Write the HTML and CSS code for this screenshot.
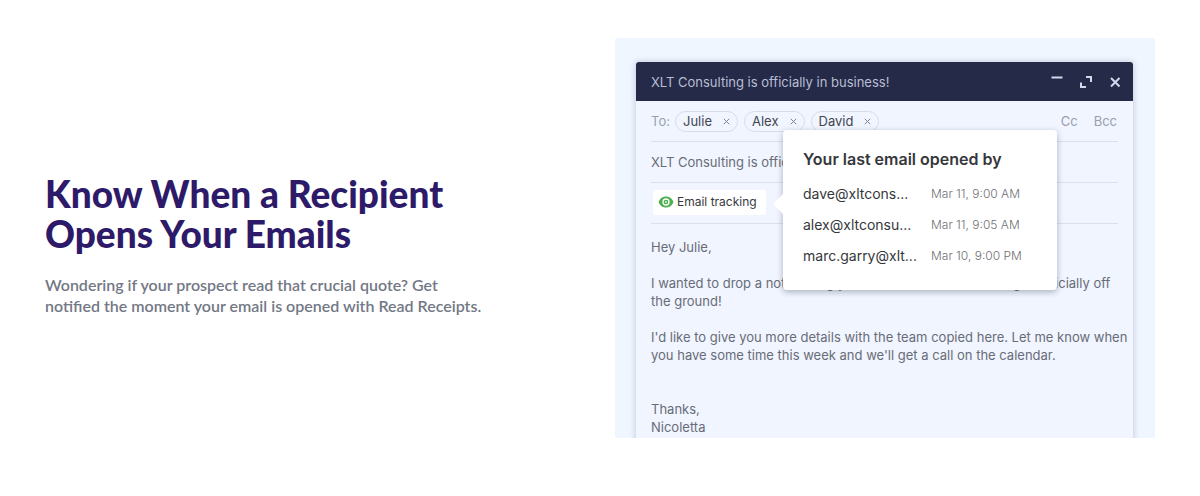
FILE: index.html
```html
<!DOCTYPE html>
<html lang="en">
<head>
<meta charset="utf-8">
<meta name="viewport" content="width=device-width, initial-scale=1">
<title>Read Receipts</title>
<link rel="stylesheet" href="styles.css">
</head>
<body>
<main class="feature">
  <section class="intro">
    <h1 class="intro-title">Know When a Recipient<br>Opens Your Emails</h1>
    <p class="intro-text">Wondering if your prospect read that crucial quote? Get<br>notified the moment your email is opened with Read Receipts.</p>
  </section>

  <section class="stage" aria-label="Email tracking example">
    <article class="window">
      <header class="titlebar">
        <h2 class="titlebar-text">XLT Consulting is officially in business!</h2>
        <div class="titlebar-actions">
          <button class="icon-button" type="button" aria-label="Minimize">
            <svg width="14" height="14" viewBox="0 0 14 14" fill="none" stroke="currentColor" stroke-width="2"><path d="M1.5 2.5h11"/></svg>
          </button>
          <button class="icon-button" type="button" aria-label="Expand">
            <svg width="14" height="14" viewBox="0 0 14 14" fill="none" stroke="currentColor" stroke-width="2"><path d="M7 2h5v5M2 7.5V12h5"/></svg>
          </button>
          <button class="icon-button" type="button" aria-label="Close">
            <svg width="14" height="14" viewBox="0 0 14 14" fill="none" stroke="currentColor" stroke-width="2"><path d="M3 3l8.500 8.500M11.500 3L3 11.500"/></svg>
          </button>
        </div>
      </header>

      <div class="fields">
        <div class="field recipients">
          <span class="to-label">To:</span>
          <ul class="chips">
            <li class="chip">Julie <button class="chip-remove" type="button" aria-label="Remove Julie"><svg width="7" height="7" viewBox="0 0 7 7" fill="none" stroke="currentColor"><path d="M.8.8l5.400 5.400M6.200.8L.8 6.200"/></svg></button></li>
            <li class="chip">Alex <button class="chip-remove" type="button" aria-label="Remove Alex"><svg width="7" height="7" viewBox="0 0 7 7" fill="none" stroke="currentColor"><path d="M.8.8l5.400 5.400M6.200.8L.8 6.200"/></svg></button></li>
            <li class="chip">David <button class="chip-remove" type="button" aria-label="Remove David"><svg width="7" height="7" viewBox="0 0 7 7" fill="none" stroke="currentColor"><path d="M.8.8l5.400 5.400M6.200.8L.8 6.200"/></svg></button></li>
          </ul>
          <div class="copies">
            <button class="copy-button" type="button">Cc</button>
            <button class="copy-button" type="button">Bcc</button>
          </div>
        </div>

        <div class="field">
          <input class="subject" type="text" aria-label="Subject" value="XLT Consulting is officially in business!">
        </div>

        <div class="field field-tools">
          <div class="tracking">
            <button class="tracking-button" type="button">
              <svg width="16" height="12" viewBox="0 0 16 12"><path d="M8 .5C4.500.5 1.700 2.700.6 6c1.100 3.300 3.900 5.500 7.400 5.500s6.300-2.200 7.400-5.500C14.300 2.700 11.500.5 8 .5z" fill="#4caf50"/><circle cx="8" cy="6" r="3" fill="none" stroke="#fff" stroke-width="1.300"/><circle cx="8" cy="6" r="1" fill="#d9f0da"/></svg>
              Email tracking
            </button>
            <aside class="popover">
              <h3 class="popover-title">Your last email opened by</h3>
              <ul class="opens">
                <li class="open"><span class="open-email">dave@xltcons...</span><time class="open-time">Mar 11, 9:00 AM</time></li>
                <li class="open"><span class="open-email">alex@xltconsu...</span><time class="open-time">Mar 11, 9:05 AM</time></li>
                <li class="open"><span class="open-email">marc.garry@xlt...</span><time class="open-time">Mar 10, 9:00 PM</time></li>
              </ul>
            </aside>
          </div>
        </div>

        <div class="message">
          <p>Hey Julie,</p>
          <p>I wanted to drop a note letting you know that XLT Consulting is officially off<br>the ground!</p>
          <p>I'd like to give you more details with the team copied here. Let me know when<br>you have some time this week and we'll get a call on the calendar.</p>
          <p class="signature">Thanks,<br>Nicoletta</p>
        </div>
      </div>
    </article>
  </section>
</main>
</body>
</html>
```

FILE: styles.css
```css
* {
  box-sizing: border-box;
}

body {
  margin: 0;
  background: #fff;
  font-family: Inter, "Liberation Sans", sans-serif;
  font-size: 13px;
  line-height: 18px;
}

h1, h2, h3, p, ul {
  margin: 0;
  padding: 0;
}

ul {
  list-style: none;
}

button, input {
  padding: 0;
  border: 0;
  background: none;
  color: inherit;
  font: inherit;
}

button {
  cursor: pointer;
}

svg {
  display: block;
}

.feature {
  display: grid;
  grid-template-columns: 1fr 1fr;
  gap: 30px;
  align-items: center;
  padding: 38px 45px 58px;
}

.intro {
  padding-top: 13px;
  font-family: Lato, "Open Sans", sans-serif;
}

.intro-title {
  color: #2d1a69;
  font-size: 37px;
  font-weight: 900;
  line-height: 40px;
}

.intro-text {
  margin-top: 20px;
  color: #737885;
  font-size: 16px;
  font-weight: 600;
  line-height: 21px;
}

.stage {
  height: 400px;
  overflow: hidden;
  padding: 24px 22px 0 21px;
  border-radius: 2px;
  background: #f0f6ff;
}

.window {
  height: 400px;
  border-radius: 3px;
  background: #f0f5ff;
  box-shadow: 0 0 6px rgba(40, 45, 85, 0.25);
}

.titlebar {
  display: flex;
  align-items: center;
  justify-content: space-between;
  height: 39px;
  padding: 0 11px 0 15px;
  border-radius: 3px 3px 0 0;
  background: #252a49;
  color: #b9bed2;
}

.titlebar-text {
  font-size: 13px;
  font-weight: 400;
}

.titlebar-actions {
  display: flex;
  gap: 15px;
  color: #d3d8ea;
}

.fields {
  padding: 0 15px;
}

.field {
  display: flex;
  align-items: center;
  height: 41px;
  border-bottom: 1px solid #dce0eb;
}

.field-tools {
  padding-bottom: 2px;
}

.to-label {
  width: 24px;
  color: #9a9fad;
}

.chips {
  display: flex;
  flex: 1;
  gap: 6px;
}

.chip {
  display: flex;
  gap: 11px;
  align-items: center;
  height: 21px;
  padding: 0 7px;
  border: 1px solid #d7dce8;
  border-radius: 11px;
  color: #43464f;
}

.chip-remove {
  color: #7e828e;
}

.copies {
  display: flex;
  gap: 16px;
  padding-right: 1px;
  color: #9a9fad;
}

.subject {
  width: 100%;
  color: #686c78;
}

.tracking {
  position: relative;
  padding-left: 2px;
}

.tracking-button {
  display: flex;
  gap: 3px;
  align-items: center;
  height: 25px;
  padding: 0 9px 0 5px;
  border-radius: 3px;
  background: #fff;
  color: #36383d;
  font-size: 12px;
}

.popover {
  position: absolute;
  top: -60px;
  left: 132px;
  width: 274px;
  height: 160px;
  padding: 19px 20px;
  border-radius: 4px;
  background: #fff;
  box-shadow: 0 2px 6px rgba(40, 45, 65, 0.35);
}

.popover::before {
  content: "";
  position: absolute;
  top: 64px;
  left: -10px;
  border: 10px solid transparent;
  border-right-color: #fff;
  border-left: 0;
}

.popover-title {
  color: #36373b;
  font-size: 16px;
  font-weight: 600;
  line-height: 20px;
}

.opens {
  display: grid;
  gap: 13px;
  margin-top: 16px;
}

.open {
  display: grid;
  grid-template-columns: 128px 1fr;
  align-items: center;
  white-space: nowrap;
}

.open-email {
  color: #36373b;
  font-size: 14px;
}

.open-time {
  color: #6f7176;
  font-size: 12px;
  font-weight: 300;
}

.message {
  display: grid;
  gap: 18px;
  padding-top: 14px;
  color: #686c78;
  white-space: nowrap;
}

.signature {
  padding-top: 18px;
}

@media (max-width: 1100px) {
  .feature {
    grid-template-columns: 1fr;
  }
}
```
